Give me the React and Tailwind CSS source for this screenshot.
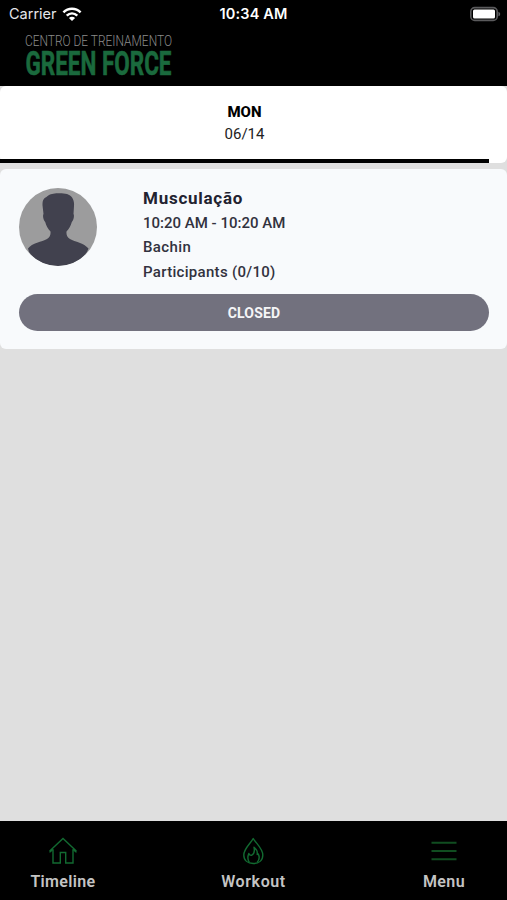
import React from 'react';

const Wifi = () => (
  <svg width="20" height="15" viewBox="0 0 20 15" fill="none" stroke="#fff" strokeWidth="2.5">
    <path d="M1.4 5.3C6.3.5 13.7.5 18.6 5.3" />
    <path d="M4.7 8.7c3.1-2.9 7.5-2.9 10.6 0" />
    <path d="M10 14 6.9 10.9c1.7-1.6 4.5-1.6 6.2 0z" fill="#fff" stroke="none" />
  </svg>
);

const Battery = () => (
  <svg width="32" height="16" viewBox="0 0 32 16">
    <rect x="0.8" y="1.6" width="26.4" height="12.8" rx="4" fill="#000" stroke="#5a5a5c" strokeWidth="1.6" />
    <rect x="3" y="3.4" width="22" height="9.200" rx="1.500" fill="#fff" />
    <path d="M28.4 5.7c2.400.8 2.400 3.800 0 4.600z" fill="#5f5f62" />
  </svg>
);

const StatusBar = () => (
  <div className="grid h-7 grid-cols-3 items-center pr-[5px] pl-[9px] text-white">
    <div className="flex items-center gap-[5px]">
      <span className="text-[14.5px] text-gray-200">Carrier</span>
      <Wifi />
    </div>
    <span className="-ml-1 text-center text-[14.5px] font-semibold tracking-[0.15px]">10:34 AM</span>
    <div className="flex justify-end">
      <Battery />
    </div>
  </div>
);

const Logo = () => (
  <svg className="ml-6 overflow-visible" width="150" height="54" viewBox="0 0 150 54" fontFamily="Roboto, sans-serif">
    <text x="1" y="17.7" fontSize="14" fontWeight="300" fill="#8b8b8b" textLength="147" lengthAdjust="spacingAndGlyphs">
      CENTRO DE TREINAMENTO
    </text>
    <text x="1.500" y="47.2" fontSize="33.500" fontWeight="700" fill="#1a6a3d" stroke="#1a6a3d" strokeWidth="0.6" textLength="146" lengthAdjust="spacingAndGlyphs">
      GREEN FORCE
    </text>
  </svg>
);

const Avatar = () => (
  <svg className="size-[78px] shrink-0 rounded-full bg-[#9c9c9d]" viewBox="0 0 78 78" fill="#41414e">
    <path d="M30 7C33 5 43 4.500 48 6c5 1.500 7.500 6 7 12l-.5 8c1 1.500.3 6-1.700 8-1 4-2.800 7-5.300 9.500-.3 3 .5 5.500 3.500 7.500 5 3 14 4 18.500 9.500L68 64C62 73 50 78 39 78S16 73 10 64l-1-3.500C13 55 23 54 28 51c3-2 3.800-4.500 3.500-7.500C29 41 27.200 38 26.200 34c-2-2-2.700-6.500-1.700-8l-.8-7c-.7-5 .3-8 2.800-9.500 1.500-.8 2-1.500 3.500-2.500z" />
  </svg>
);

const HomeIcon = () => (
  <svg width="30" height="30" viewBox="0 0 30 30" fill="none" stroke="#126a31" strokeWidth="1.4">
    <path d="M5 13.500 2.200 15.800 2 14.800 15 2.500l13 12.300-.2 1L25 13.500" />
    <path d="M5 13.300V27h7.300V16.500h5.400V27H25V13.300" />
  </svg>
);

const FlameIcon = () => (
  <svg width="30" height="30" viewBox="0 0 30 30" fill="none" stroke="#126a31" strokeWidth="1.4" strokeLinejoin="round">
    <path d="M14.200 2.500C12 7 4.800 12.500 4.800 19c0 5.500 4 8.500 9.500 8.500s9.500-3 9.500-8.500C23.800 12.500 16.700 7 14.200 2.500z" />
    <path d="M10.300 26.300c-2-3-1.700-6-.5-8.800.6 1.500 1.400 2 2.700 1.800 3-1.300 3.300-4.300 2.500-8 3 2.200 3.600 4.700 3.200 7.200l1-.6c1.500 3 1.300 5.900-1 8.400" />
  </svg>
);

const MenuIcon = () => (
  <svg width="30" height="30" viewBox="0 0 30 30" stroke="#104d20" strokeWidth="2">
    <path d="M2.500 6.700h25M2.500 15h25M2.500 23.300h25" />
  </svg>
);

const tabs = [
  { label: 'Timeline', icon: <HomeIcon />, tracking: 'tracking-[0.35px]' },
  { label: 'Workout', icon: <FlameIcon />, tracking: 'tracking-[0.6px]' },
  { label: 'Menu', icon: <MenuIcon />, tracking: 'tracking-[0.4px]' },
];

const App = () => {
  return (
    <div className="flex h-[900px] w-full flex-col overflow-hidden bg-[#dfdfdf] font-['Roboto',sans-serif]">
      <header className="h-[86px] shrink-0 bg-black font-['Inter',sans-serif]">
        <StatusBar />
        <Logo />
      </header>

      <section className="h-[77px] shrink-0 rounded-md bg-white text-black">
        <div className="flex h-[73px] w-[489px] flex-col items-center pt-[15px]">
          <span className="text-[15px] leading-[22px] font-extrabold">MON</span>
          <span className="text-[15px] leading-[22px] text-[#222]">06/14</span>
        </div>
        <div className="h-[4px] w-[489px] bg-black" />
      </section>

      <main className="mt-1.5 h-[180px] shrink-0 rounded-md bg-[#f8fafc] pt-[17px] pr-[18px] pl-[19px]">
        <div className="flex h-[108px] gap-[46px]">
          <div className="pt-0.5">
            <Avatar />
          </div>
          <div className="text-[15px] leading-[24.5px] font-medium text-[#32323e]">
            <h2 className="text-[17px] leading-[24.5px] font-bold tracking-[0.75px] text-[#222230]">Musculação</h2>
            <p>10:20 AM - 10:20 AM</p>
            <p className="tracking-[0.4px]">Bachin</p>
            <p className="tracking-[0.3px]">Participants (0/10)</p>
          </div>
        </div>
        <button className="block h-[37px] w-full rounded-full bg-[#72717e] text-[14px] leading-[38px] font-bold tracking-[0.2px] text-[#f5f5f7]">
          CLOSED
        </button>
      </main>

      <nav className="mt-auto flex h-[79px] shrink-0 justify-between bg-black px-[30px] pt-[15px] text-[#c4c4c4]">
        {tabs.map((tab) => (
          <div key={tab.label} className="flex w-[66px] flex-col items-center">
            {tab.icon}
            <span className={`text-[16px] leading-[32px] font-semibold ${tab.tracking}`}>{tab.label}</span>
          </div>
        ))}
      </nav>
    </div>
  );
};

export default App;
